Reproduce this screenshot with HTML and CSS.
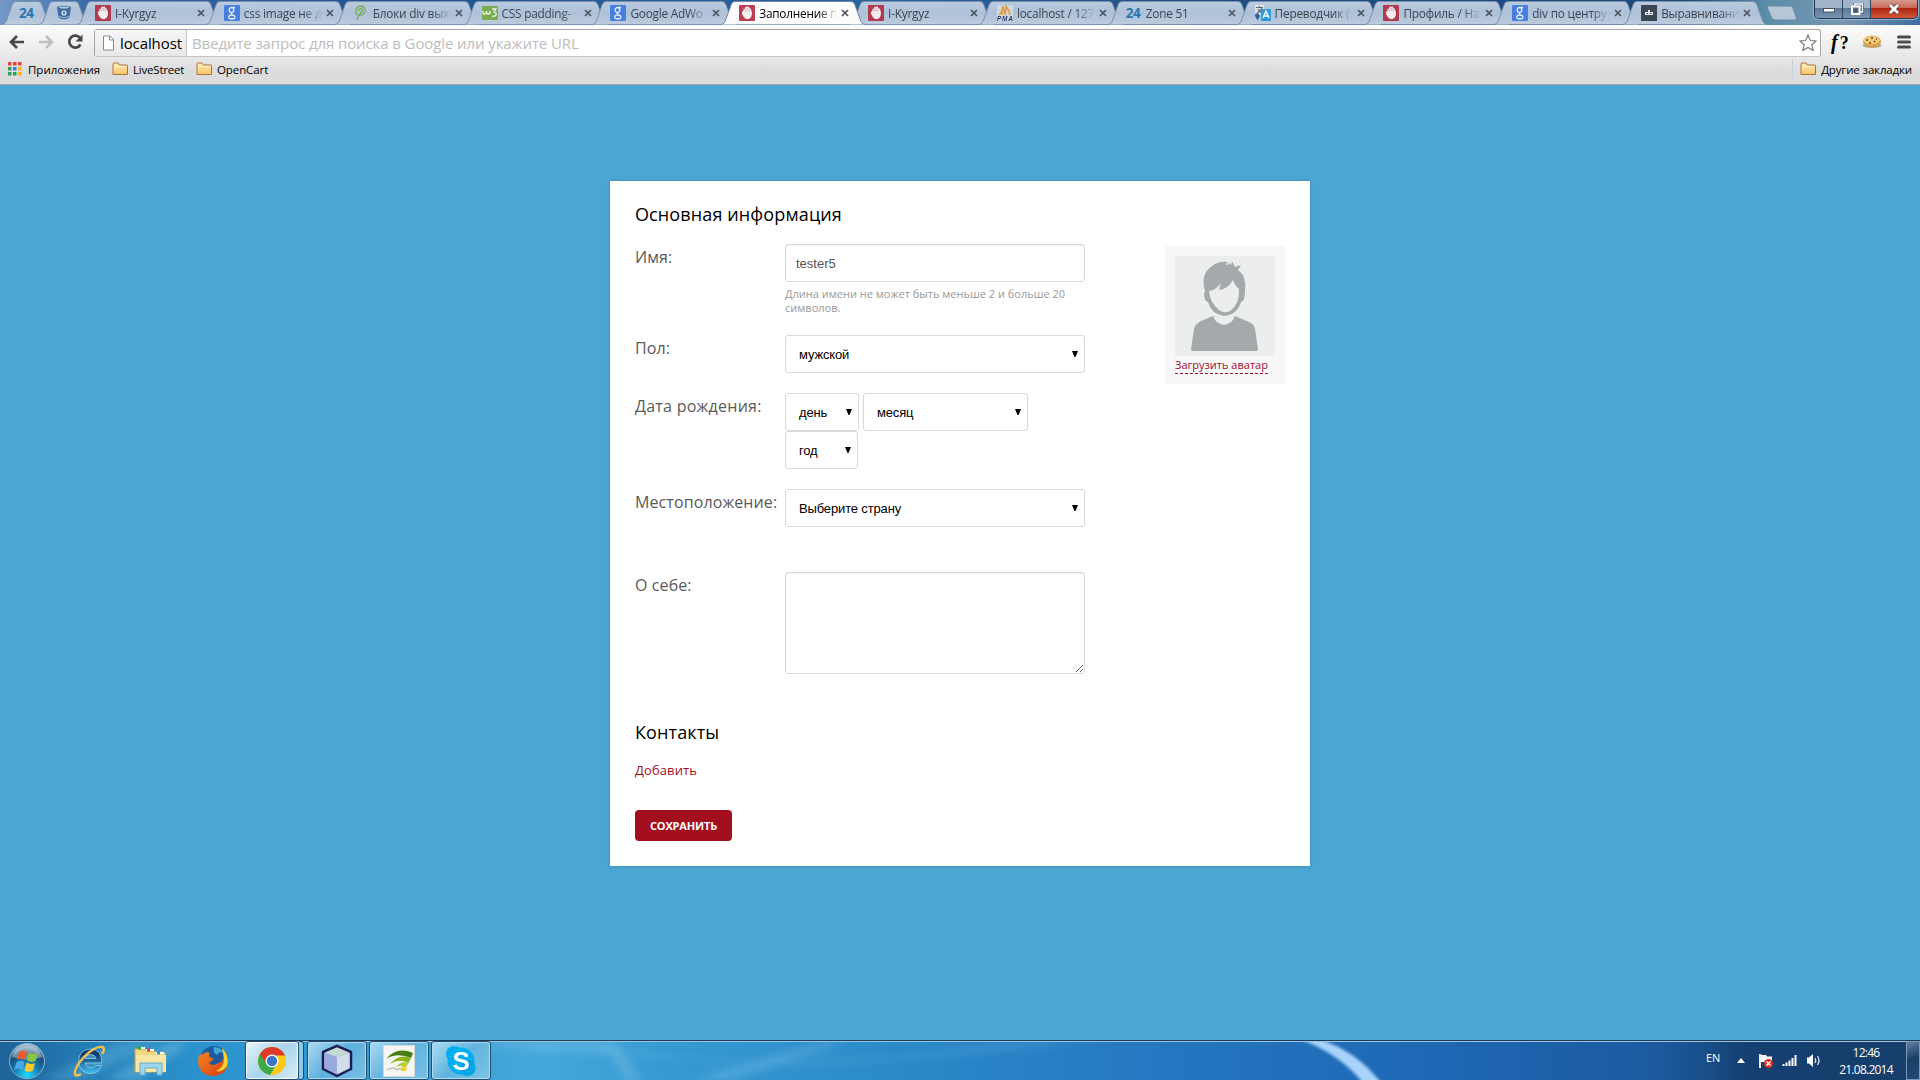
FILE: index.html
```html
<!DOCTYPE html>
<html lang="ru">
<head>
<meta charset="utf-8">
<title>Заполнение профиля</title>
<link rel="stylesheet" href="styles.css">
</head>
<body>
<svg class="defs" width="0" height="0">
  <defs>
    <linearGradient id="tabfill" x2="0" y2="1"><stop offset="0" stop-color="#bacbdf"/><stop offset=".5" stop-color="#aec1d8"/><stop offset="1" stop-color="#bdcbdd"/></linearGradient>
    <linearGradient id="folderfill" x2="0" y2="1"><stop stop-color="#ffe9b8"/><stop offset="1" stop-color="#fbc566"/></linearGradient>
    <radialGradient id="orb" cx=".5" cy=".9" r=".9"><stop stop-color="#21dcff"/><stop offset=".4" stop-color="#147cb0"/><stop offset=".7" stop-color="#194d78"/><stop offset="1" stop-color="#b9d2e3"/></radialGradient>
    <linearGradient id="ieblue" x2="0" y2="1"><stop offset=".2" stop-color="#16386b"/><stop offset="1" stop-color="#3cc0f5"/></linearGradient>
    <linearGradient id="fox" x2="1" y2="1"><stop stop-color="#f58a1f"/><stop offset="1" stop-color="#d93a10"/></linearGradient>
  </defs>
  <symbol id="tab" viewBox="0 0 144 25" preserveAspectRatio="none"><path d="M0 24.5C3 24 4 22 5 19L10 5Q11 1.500 14 1.500H130Q133 1.500 134 5L139 19C140 22 141 24 144 24.500"/></symbol>
  <symbol id="tab-pinned" viewBox="0 0 50 25"><path d="M0 24.500C3 24 4 22 5 19L10 5Q11 1.500 14 1.500H36Q39 1.500 40 5L45 19C46 22 47 24 50 24.500"/></symbol>
  <symbol id="x" viewBox="0 0 8 8"><path d="M1 1L7 7M7 1L1 7" stroke="#4c545e" stroke-width="1.700"/></symbol>
  <symbol id="hand" viewBox="0 0 16 16"><rect width="16" height="16" rx="1" fill="#b32e43"/><path d="M3 7L4.500 5.500L4.500 3.500L6 4L6.500 1.500L8 2L9.500 1.300L10.500 3L12 4L13 8Q13 13 9.500 14H7Q4.500 12.500 3 9Z" fill="#f8eff1"/><path d="M6.200 4.500V6.500M8.200 3V6M10.200 3.500V6.500" stroke="#c77a86" stroke-width=".6"/></symbol>
  <symbol id="goog" viewBox="0 0 16 16"><rect width="16" height="16" rx="1" fill="#3f7ae0"/><g fill="none" stroke="#e8effb" stroke-width="1.300"><ellipse cx="7.500" cy="5" rx="2.300" ry="2.500"/><ellipse cx="7.800" cy="12" rx="3" ry="2"/><path d="M8.500 2.500H11M8 7.500Q6 9 9 10"/></g></symbol>
  <symbol id="folder" viewBox="0 0 16 14"><path d="M1 12.500V2Q1 1 2 1H6L7.500 3H14.500Q15.500 3 15.500 4V12.500Z" fill="url(#folderfill)" stroke="#a8763c"/><path d="M2 4.500H14.500" stroke="#fff3d0"/></symbol>
  <symbol id="arrow" viewBox="0 0 6 6"><path d="M0 0H6L3.500 6H2.500Z"/></symbol>
</svg>

<header class="browser">
  <div class="tabstrip">
    <div class="tab pinned first"><svg class="shape"><use href="#tab-pinned"/></svg><b class="zone">24</b></div>
    <div class="tab pinned"><svg class="shape"><use href="#tab-pinned"/></svg><svg class="fav" viewBox="0 0 16 16"><path d="M1 2Q8-.5 15 2L13.500 12.500Q8 16.500 2.500 12.500Z" fill="#336699"/><ellipse cx="8" cy="2.500" rx="5" ry="1" fill="#b3c9df"/><circle cx="8" cy="8" r="2.600" fill="#dfe8f1"/><circle cx="8" cy="8" r="1.200" fill="#336699"/><path d="M3 11.500Q8 14 13 11.500" stroke="#b3c9df" fill="none" stroke-width=".8"/></svg></div>
    <div class="tab start"><svg class="shape"><use href="#tab"/></svg><svg class="fav"><use href="#hand"/></svg><span class="title">I-Kyrgyz</span><svg class="close"><use href="#x"/></svg></div>
    <div class="tab"><svg class="shape"><use href="#tab"/></svg><svg class="fav"><use href="#goog"/></svg><span class="title">css image не д</span><svg class="close"><use href="#x"/></svg></div>
    <div class="tab"><svg class="shape"><use href="#tab"/></svg><svg class="fav" viewBox="0 0 16 16"><path d="M4 15Q6 9 9 7M7 10Q2 11 3 5Q4 1 8 1Q13 2 12 7Q10 11 6 10M5 6Q7 2 10 5Q9 8 7 7" fill="none" stroke="#75a953" stroke-width="1.300"/></svg><span class="title">Блоки div вых</span><svg class="close"><use href="#x"/></svg></div>
    <div class="tab"><svg class="shape"><use href="#tab"/></svg><svg class="fav" viewBox="0 0 16 16"><rect y="1" width="16" height="14" rx="1" fill="#74ad43"/><path d="M1 6V8Q2.500 10 4.500 8V6V8Q6 10 8 8V6M10 4H14L12 7Q15 8 14 10Q12 12 10 11" fill="none" stroke="#f3f8ee" stroke-width="1.300"/></svg><span class="title">CSS padding-</span><svg class="close"><use href="#x"/></svg></div>
    <div class="tab"><svg class="shape"><use href="#tab"/></svg><svg class="fav"><use href="#goog"/></svg><span class="title">Google AdWo</span><svg class="close"><use href="#x"/></svg></div>
    <div class="tab active"><svg class="shape"><use href="#tab"/></svg><svg class="fav"><use href="#hand"/></svg><span class="title">Заполнение п</span><svg class="close"><use href="#x"/></svg></div>
    <div class="tab"><svg class="shape"><use href="#tab"/></svg><svg class="fav"><use href="#hand"/></svg><span class="title">I-Kyrgyz</span><svg class="close"><use href="#x"/></svg></div>
    <div class="tab"><svg class="shape"><use href="#tab"/></svg><svg class="fav" viewBox="0 0 16 16"><rect width="16" height="16" fill="#d3dbe3"/><path d="M2 10Q6 6 6 1L8 10M8 10Q9 5 9 1Q12 5 13 10M5 10V4" stroke="#e8942e" stroke-width="1.500" fill="none"/><text class="pma" x="0" y="15.800" textLength="16">PMA</text></svg><span class="title">localhost / 127</span><svg class="close"><use href="#x"/></svg></div>
    <div class="tab"><svg class="shape"><use href="#tab"/></svg><b class="zone">24</b><span class="title">Zone 51</span><svg class="close"><use href="#x"/></svg></div>
    <div class="tab"><svg class="shape"><use href="#tab"/></svg><svg class="fav" viewBox="0 0 16 16"><rect width="9" height="10" fill="#e6e9e4"/><path d="M1 2.500H8M4.500 1V3M2 8Q6 6 7 3M3 4Q5 8 8 8" stroke="#51616d" stroke-width="1.200" fill="none"/><path d="M0 9L3 8L5 11L3 15Q0 13 0 9" fill="#135fae"/><rect x="6" y="4" width="10" height="12" rx="1" fill="#2196dc"/><path d="M8 13L11 6L14 13M9 11H13" stroke="#fff" stroke-width="1.400" fill="none"/></svg><span class="title">Переводчик (</span><svg class="close"><use href="#x"/></svg></div>
    <div class="tab"><svg class="shape"><use href="#tab"/></svg><svg class="fav"><use href="#hand"/></svg><span class="title">Профиль / На</span><svg class="close"><use href="#x"/></svg></div>
    <div class="tab"><svg class="shape"><use href="#tab"/></svg><svg class="fav"><use href="#goog"/></svg><span class="title">div по центру</span><svg class="close"><use href="#x"/></svg></div>
    <div class="tab"><svg class="shape"><use href="#tab"/></svg><svg class="fav" viewBox="0 0 16 16"><rect width="16" height="16" fill="#303d46"/><path d="M4 7H12V10H4ZM7 5H9V7H7Z" fill="#e6ebee"/><path d="M5.500 8.500H7M9 8.500H10.500" stroke="#303d46"/></svg><span class="title">Выравнивани</span><svg class="close"><use href="#x"/></svg></div>
    <svg class="newtab" viewBox="0 0 32 16"><path d="M2.500 1H24Q26 1 27 3L30.500 13Q31 15 29 15H9Q6.500 15 5.500 12.500L1.500 3Q1 1 2.500 1Z" fill="#b5c6d8" stroke="#6c87a5"/></svg>
    <div class="winctl">
      <div class="wbtn"><svg viewBox="0 0 14 12" width="14" height="12"><rect x="1.500" y="5.500" width="11" height="3.500" fill="#fff" stroke="#455468"/></svg></div>
      <div class="wbtn"><svg viewBox="0 0 14 12" width="14" height="12"><path d="M4.500 1H12.500V9H4.500Z" fill="none" stroke="#44536a" stroke-width="3"/><path d="M4.500 1H12.500V9H4.500Z" fill="none" stroke="#fff" stroke-width="1.500"/><rect x="2" y="3.500" width="7.500" height="7.500" fill="#5a6d85" stroke="#fff" stroke-width="2"/><rect x="4.500" y="6" width="2.500" height="2.500" fill="#44536a"/></svg></div>
      <div class="wbtn red"><svg viewBox="0 0 14 12" width="14" height="12"><path d="M3 2L11 10M11 2L3 10" stroke="#5d3a3f" stroke-width="4.400"/><path d="M3 2L11 10M11 2L3 10" stroke="#fff" stroke-width="2.800"/></svg></div>
    </div>
  </div>

  <div class="toolbar">
    <svg class="nav" viewBox="0 0 18 18"><path d="M16 9H3M9 3L3 9L9 15" fill="none" stroke="#474747" stroke-width="2.700"/></svg>
    <svg class="nav fwd" viewBox="0 0 18 18"><path d="M2 9H15M9 3L15 9L9 15" fill="none" stroke="#bfbfbf" stroke-width="2.500"/></svg>
    <svg class="nav reload" viewBox="0 0 18 18"><path d="M14.200 5.200A6 6 0 1 0 14.500 11.500" fill="none" stroke="#474747" stroke-width="2.600"/><path d="M16.500 1.500V8.500H9.500Z" fill="#474747"/></svg>
    <div class="omnibox">
      <div class="chip"><svg width="13" height="16" viewBox="0 0 13 16"><path d="M1.500 1H8L11.500 4.500V15H1.500Z" fill="#fff" stroke="#8a8a8a"/><path d="M7.500 1V5H11.500" fill="none" stroke="#8a8a8a"/></svg><span>localhost</span></div>
      <span class="ph">Введите запрос для поиска в Google или укажите URL</span>
      <svg class="star" viewBox="0 0 18 18"><path d="M9 1L11.400 6.500L17 7L12.800 10.800L14.200 16.500L9 13.500L3.800 16.500L5.200 10.800L1 7L6.600 6.500Z" fill="#fff" stroke="#777" stroke-width="1.100"/></svg>
    </div>
    <div class="fq"><i>f</i>?</div>
    <svg class="cookie" viewBox="0 0 20 14"><ellipse cx="10" cy="10.500" rx="9.500" ry="2.500" fill="#a9a9a4"/><ellipse cx="10" cy="6.500" rx="9" ry="6" fill="#dba13f"/><ellipse cx="9.500" cy="5.200" rx="8" ry="4.300" fill="#f1ca76"/><path d="M4 5H6M9 3H11M12 6L13 7M7 8H9M14 4H15" stroke="#6d4217" stroke-width="1.300"/></svg>
    <svg class="menu" viewBox="0 0 14 14"><path d="M1.500 2H12.500M1.500 7H12.500M1.500 12H12.500" stroke="#4c4c4c" stroke-width="3" stroke-linecap="round"/></svg>
  </div>

  <nav class="bookmarks">
    <svg class="apps" viewBox="0 0 14 14"><g fill="#ea4335"><path d="M0 0H3.500V3.500H0ZM5 0H8.500V3.500H5ZM10 0H13.500V3.500H10Z"/></g><path d="M0 5H3.500V8.500H0ZM0 10H3.500V13.500H0ZM5 10H8.500V13.500H5Z" fill="#2ba35a"/><path d="M5 5H8.500V8.500H5Z" fill="#3d7df0"/><path d="M10 5H13.500V8.500H10ZM10 10H13.500V13.500H10Z" fill="#f5b21a"/></svg>
    <span class="b-apps">Приложения</span>
    <svg class="folder"><use href="#folder"/></svg><span class="b-live">LiveStreet</span>
    <svg class="folder"><use href="#folder"/></svg><span>OpenCart</span>
    <i class="sep"></i>
    <svg class="folder"><use href="#folder"/></svg><span class="b-other">Другие закладки</span>
  </nav>
</header>

<main class="page">
  <form class="card">
    <h2 class="heading">Основная информация</h2>
    <div class="columns">
      <div class="fields">
        <div class="row r-name"><label class="label">Имя:</label><div class="value"><div class="field text">tester5</div><p class="hint">Длина имени не может быть меньше 2 и больше 20 символов.</p></div></div>
        <div class="row"><label class="label">Пол:</label><div class="value"><div class="field select">мужской<svg><use href="#arrow"/></svg></div></div></div>
        <div class="row"><label class="label l-date">Дата рождения:</label><div class="value dates"><div class="field select day">день<svg><use href="#arrow"/></svg></div><div class="field select month">месяц<svg><use href="#arrow"/></svg></div><div class="field select year">год<svg><use href="#arrow"/></svg></div></div></div>
        <div class="row r-place"><label class="label">Местоположение:</label><div class="value"><div class="field select">Выберите страну<svg><use href="#arrow"/></svg></div></div></div>
        <div class="row"><label class="label">О себе:</label><div class="value"><textarea class="field area"></textarea></div></div>
      </div>
      <aside class="avatar">
        <svg viewBox="0 0 100 100"><rect width="100" height="100" fill="#ebeeed"/><g fill="#a5a9ac"><path d="M30 35Q25 18 37 10Q44 5 52 6L51 9L54 8L51 5L56 9L57 5L60 11L66 9L63 14Q72 20 70 35Q70 45 66 46Q62 59 49 60Q36 58 33 46Q29 45 29 38Z"/><path d="M38 60L48 63H51L60 60L74 66Q79 68 80 73L83 93Q83 95 80 95H18Q16 95 16 93L19 73Q20 68 26 65Z"/></g><path d="M34 35Q41 34 46 27L44 34Q53 33 58 24Q60 30 64 33Q65 48 55 55Q49 58 44 54Q35 47 34 35Z" fill="#ebeeed"/><path d="M38 60Q41 68 49 69Q57 68 60 60Q54 62 49 62Q43 62 38 60Z" fill="#ebeeed"/></svg>
        <a class="upload">Загрузить аватар</a>
      </aside>
    </div>
    <h2 class="heading contacts">Контакты</h2>
    <a class="add">Добавить</a>
    <button class="save" type="button">СОХРАНИТЬ</button>
  </form>
</main>

<footer class="taskbar">
  <svg class="aurora" viewBox="0 0 1920 38" preserveAspectRatio="none">
    <defs><filter id="soft"><feGaussianBlur stdDeviation="4"/></filter><filter id="soft2"><feGaussianBlur stdDeviation="1.800"/></filter></defs>
    <g filter="url(#soft)" fill="#8ed2ef"><path d="M40 38L120 0H160L80 38Z" opacity=".25"/><path d="M105 38L170 0H190L140 38Z" opacity=".35"/><path d="M490 0H615L642 38H625L610 12L490 6Z" opacity=".3"/><path d="M690 38L825 0H845L730 38Z" opacity=".3"/><path d="M600 5Q800 35 1010 0H1080Q900 20 800 22Q700 20 600 10Z" opacity=".22"/></g>
    <path d="M1300-3Q1340 12 1364 42H1382Q1356 8 1318-3Z" fill="#a9d3fb" filter="url(#soft2)"/>
  </svg>
  <div class="launch start-orb"><svg width="38" height="38" viewBox="0 0 38 38"><circle cx="19" cy="19" r="17.500" fill="url(#orb)" stroke="#8fb4cc"/><path d="M4 15Q7 4 19 4T34 15Q20 20 4 15Z" fill="#fff" opacity=".35"/><path d="M11 10Q15 7 19 10L17 18Q13 15 9 18Z" fill="#ed5a2b"/><path d="M21 10.500Q25 13 30 11L27.500 19Q23 21 19 18.500Z" fill="#8bc63f"/><path d="M8.500 20Q12.500 17 16.500 20L14.500 28Q10 25 6 28Z" fill="#4aa7e8"/><path d="M18.500 20.500Q23 23 27 21L25 28.500Q21 31 16.500 28.500Z" fill="#fbc928"/></svg></div>
  <div class="launch"><svg width="34" height="34" viewBox="0 0 34 34"><path d="M30 19H13Q14 24 19 24Q22 24 23.500 21.500H29.500Q27 29.500 18.500 29.500Q7 29 6.500 17Q7 5.500 18.500 5Q30 5.500 30 19ZM13 14.500H24Q23 10.500 18.500 10.500Q14 10.500 13 14.500Z" fill="url(#ieblue)" stroke="#8fd0f2" stroke-width=".8"/><path d="M9 30Q4 33 3 30Q2 24 12 13Q23 2 30 3Q34 4 30 10" fill="none" stroke="#f2c24d" stroke-width="2.400"/></svg></div>
  <div class="launch"><svg width="34" height="32" viewBox="0 0 34 32"><path d="M1 27V4H11L13 6H21L23 8H31V27Z" fill="#f3d77c" stroke="#c9a44b"/><path d="M4 3H11M12 5H20M22 8H30" stroke="#fff" stroke-width="2"/><path d="M4 3H7" stroke="#2cae31" stroke-width="3"/><path d="M13 5H16" stroke="#e43b28" stroke-width="3"/><path d="M23 8H26" stroke="#2b8de0" stroke-width="3"/><path d="M2 10H32V27H2Z" fill="#f8e6a4"/><path d="M6 30V18H28V30H23V23H11V30Z" fill="#9ed5ee" stroke="#69abc9"/></svg></div>
  <div class="launch"><svg width="32" height="32" viewBox="0 0 32 32"><circle cx="17" cy="15" r="14" fill="#1c5a9e"/><path d="M17 2Q24 2 27 8Q22 6 20 10Q15 7 17 2Z" fill="#44a8db"/><path d="M2 8L5 10Q8 6 13 8Q11 10 13 12L17 14L12 18Q16 22 21 18Q27 18 26 9Q27 5 25 4Q31 9 31 17Q30 30 16 31Q2 30 1 17Q1 12 3 10Z" fill="url(#fox)"/><path d="M25 3Q33 11 30 21Q25 28 19 26Q28 22 27 12Z" fill="#fbd12f"/></svg></div>
  <div class="app chrome"><svg width="30" height="30" viewBox="0 0 30 30"><circle cx="15" cy="15" r="14" fill="#fbc916"/><path d="M15 15L2.900 8A14 14 0 0 0 13 28.900L20 18Z" fill="#3bab4b"/><path d="M2.900 8A14 14 0 0 1 28 9.500H15L9.500 18Z" fill="#dd3a2d"/><circle cx="15" cy="15" r="6.500" fill="#fff"/><circle cx="15" cy="15" r="5.200" fill="#3a76c8"/></svg></div>
  <div class="stack"></div>
  <div class="app"><svg width="32" height="34" viewBox="0 0 32 34"><path d="M16 2L30 8V25L16 32L2 25V8Z" fill="#a8b8da" stroke="#1a1e54" stroke-width="2.500" stroke-linejoin="round"/><path d="M3.500 9L16 13V30L3.500 24Z" fill="#9aa9e2"/><path d="M28.500 9L16 13V30L28.500 24Z" fill="#d3dcea"/><path d="M16 3.500L28 8.500L16 13L4 8.500Z" fill="#c3d9d4"/></svg></div>
  <div class="app"><svg width="32" height="32" viewBox="0 0 32 32"><rect x=".5" y=".5" width="31" height="31" fill="#f5f5f1" stroke="#d7ddd5"/><path d="M3 14Q14 1 30 8L28 13Q14 7 3 14Z" fill="#487d14"/><path d="M7 19Q16 8 28 13L25.500 18Q15 13 7 19Z" fill="#8ab51c"/><path d="M12 23Q18 15 25.500 18L23 22Q17 19 12 23Z" fill="#b5cf38"/><circle cx="21" cy="23.500" r="2.700" fill="#eed02f"/><path d="M4 25Q10 21 14 25Q17 22 19 25" stroke="#a0a0a0" fill="none"/></svg></div>
  <div class="app"><svg width="32" height="32" viewBox="0 0 32 32"><circle cx="16" cy="16" r="13.500" fill="#00aff0"/><circle cx="9" cy="9" r="8" fill="#00aff0"/><circle cx="22.500" cy="23" r="8" fill="#00a5e6"/><text class="sk" x="7.500" y="25">S</text></svg></div>
  <div class="tray">
    <span class="lang">EN</span>
    <svg class="up" width="8" height="5" viewBox="0 0 8 5"><path d="M0 5L4 0L8 5Z" fill="#fff"/></svg>
    <svg class="flag" width="16" height="16" viewBox="0 0 16 16"><path d="M2 1V15" stroke="#fff" stroke-width="1.800"/><path d="M3 2H8L9 3.500H14V9H3Z" fill="#fff"/><circle cx="10.500" cy="10.500" r="4.500" fill="#e02b20"/><path d="M8.500 8.500L12.500 12.500M12.500 8.500L8.500 12.500" stroke="#fff" stroke-width="1.500"/></svg>
    <svg class="bars" width="16" height="13" viewBox="0 0 16 13"><path d="M1.500 12V10M4.500 12V8.500M7.500 12V6.500M10.500 12V4M13.500 12V1" stroke="#fff" stroke-width="2"/></svg>
    <svg class="spk" width="16" height="15" viewBox="0 0 16 15"><path d="M1 4.500H3L7 1V14L3 10.500H1Z" fill="#fff"/><path d="M9 5Q10.500 7.500 9 10M11.500 3Q14.500 7.500 11.500 12" fill="none" stroke="#dbe6f0" stroke-width="1.200"/></svg>
    <div class="clock"><span>12:46</span><span>21.08.2014</span></div>
    <div class="desk"></div>
  </div>
</footer>
</body>
</html>
```

FILE: styles.css
```css
* { box-sizing: border-box; }
body { margin: 0; width: 1920px; height: 1080px; overflow: hidden; display: flex; flex-direction: column; background: #4ca6d3; font-family: "Open Sans", sans-serif; }
.defs { position: absolute; }
svg { display: block; flex: none; }
h2, p { margin: 0; }

/* Browser chrome */
.browser { height: 85px; flex: none; display: flex; flex-direction: column; border-bottom: 1px solid #a3a3a3; background: #dedede; }
.tabstrip { height: 25px; flex: none; display: flex; align-items: flex-start; background: linear-gradient(90deg, #7399c8 0, #3567a4 5%, #215490 20%, #2a629f 45%, #1f4d83 65%, #1e4a7d 88%, #5b8ea8 92%, #7896b4 96%, #3d6da0 100%); }
.tab { position: relative; width: 144px; height: 25px; margin-right: -15.170px; flex: none; display: flex; align-items: center; padding: 0 0 0 18px; }
.shape { position: absolute; left: 0; top: 0; width: 144px; height: 25px; fill: url(#tabfill); stroke: #7b8fa8; z-index: 0; }
.tab.pinned { width: 50px; margin-right: -9px; padding: 0; justify-content: center; }
.tab.first { margin-left: 2px; margin-right: -13px; }
.tab.pinned .shape { width: 50px; }
.tab.pinned .fav, .tab.pinned .zone { margin-right: 0; }
.tab.start { margin-left: -3px; }
.tab.active { z-index: 2; }
.tab.active .shape { fill: #fcfcfc; stroke: #6e87a6; }
.fav { position: relative; width: 16px; height: 16px; margin-right: 4px; margin-top: 1px; opacity: .92; }
.title { position: relative; width: 78px; white-space: nowrap; font-size: 11.800px; line-height: 20px; letter-spacing: -.2px; color: #3d4550; mask-image: linear-gradient(90deg, #000 76%, transparent 100%); }
.tab.active .title { color: #000; }
.close { position: relative; width: 8px; height: 8px; margin: 1px 0 0 4px; }
.zone { position: relative; width: 16px; margin-right: 4px; font-size: 13.500px; line-height: 20px; letter-spacing: -.4px; color: #2878af; }
.pma { font: italic bold 6.500px "Liberation Sans", sans-serif; fill: #222e62; }
.newtab { width: 32px; height: 16px; margin: 5px 0 0 14px; }
.winctl { display: flex; width: 104px; height: 19px; margin-left: auto; margin-right: 2px; border: 1px solid #25384f; border-top: 0; border-radius: 0 0 5px 5px; overflow: hidden; box-shadow: 0 0 1px 1px #9cb6cf; }
.wbtn { width: 28px; display: flex; align-items: center; justify-content: center; background: linear-gradient(#a0b4c9 0 45%, #5c7896 46%, #7796b3); border-right: 1px solid #2f455e; }
.wbtn.red { flex: 1; border: 0; background: linear-gradient(#d59b8f 0, #c96753 44%, #b0240f 46%, #d0583a); }

.toolbar { height: 33px; flex: none; display: flex; align-items: center; background: linear-gradient(#fcfcfc, #e7e7e7); padding: 1px 8px 0; }
.nav { width: 18px; height: 18px; }
.nav.fwd { margin-left: 11px; }
.nav.reload { margin-left: 11px; }
.omnibox { width: 1727px; height: 28px; margin: 2px 0 0 10px; display: flex; align-items: center; background: #fff; border: 1px solid #a5a5a5; border-bottom-color: #c4c4c4; border-radius: 3px; }
.chip { width: 92px; height: 26px; display: flex; align-items: center; gap: 5px; padding-left: 7px; background: linear-gradient(#f6f6f6, #e8e8e8); border-right: 1px solid #c2c2c2; font-size: 15px; letter-spacing: -.1px; color: #000; }
.ph { margin-left: 5px; font-size: 15px; letter-spacing: -.1px; color: #bcbcbc; white-space: nowrap; }
.star { width: 18px; height: 18px; margin: 0 3px 0 auto; }
.fq { width: 22px; margin-left: 10px; font: bold 18px/24px "Liberation Serif", serif; letter-spacing: 2px; white-space: nowrap; }
.fq i { font-size: 20px; }
.cookie { width: 20px; height: 14px; margin-left: 9px; }
.menu { width: 14px; height: 14px; margin-left: 15px; }
.bookmarks { flex: 1; display: flex; align-items: center; padding: 0 8px 4px; background: linear-gradient(#e7e7e7, #dcdcdc 50%); font-size: 11.500px; letter-spacing: -.1px; color: #000; white-space: nowrap; }
.apps { width: 14px; height: 14px; margin-right: 6px; }
.folder { width: 16px; height: 14px; margin-right: 5px; }
.b-apps { width: 84px; letter-spacing: 0; }
.b-live { width: 63px; letter-spacing: -.2px; }
.sep { width: 1px; height: 20px; margin: 0 7px 0 auto; background: #c5d0da; }
.b-other { letter-spacing: -.15px; }

/* Profile form */
.page { flex: 1; }
.card { width: 700px; height: 685px; margin: 96px auto 0; padding: 21px 25px; background: #fff; box-shadow: 0 0 3px rgba(0, 0, 0, .2); display: flex; flex-direction: column; align-items: flex-start; }
.heading { font-size: 18px; font-weight: 400; line-height: 24px; letter-spacing: .12px; color: #000; }
.columns { width: 650px; margin-top: 18px; display: flex; justify-content: space-between; align-items: flex-start; }
.row { display: flex; margin-bottom: 20px; }
.label { width: 150px; height: 20px; padding-top: 3px; font-size: 16px; line-height: 20px; letter-spacing: .1px; color: #5a5a5a; white-space: nowrap; }
.l-date { letter-spacing: .25px; }
.value { width: 300px; }
.field { height: 38px; border: 1px solid #d9d9d9; border-radius: 3px; display: flex; align-items: center; font: 13px "Liberation Sans", sans-serif; background: #fff; }
.text { padding: 0 10px; color: #555; box-shadow: inset 0 1px 2px rgba(0, 0, 0, .07); }
.hint { margin-top: 5px; font-size: 11px; line-height: 14px; color: #999; }
.select { padding: 1px 6px 0 13px; justify-content: space-between; color: #000; letter-spacing: -.15px; }
.select svg { width: 6px; height: 6px; margin-top: -2px; }
.dates { display: flex; flex-wrap: wrap; column-gap: 4px; }
.day { width: 74px; }
.month { width: 165px; }
.year { width: 73px; }
.r-place { margin-bottom: 45px; }
.area { display: block; width: 300px; height: 102px; padding: 8px; box-shadow: inset 0 1px 2px rgba(0, 0, 0, .07); }
.avatar { width: 120px; height: 138px; margin-top: 2px; padding: 10px; background: #f7f7f7; display: flex; flex-direction: column; align-items: flex-start; }
.avatar svg { width: 100px; height: 100px; }
.upload { margin-top: 1px; border-bottom: 1px dashed #a31030; font-size: 11px; line-height: 16px; color: #a31030; white-space: nowrap; }
.contacts { margin-top: 26px; }
.add { margin-top: 17px; font-size: 13px; line-height: 18px; letter-spacing: .1px; color: #a40e22; }
.save { width: 97px; height: 31px; margin-top: 31px; padding: 0; border: 0; border-radius: 4px; background: #a40f20; color: #fff; font: bold 11px "Open Sans", sans-serif; letter-spacing: -.15px; }

/* Taskbar */
.taskbar { position: relative; height: 40px; flex: none; display: flex; align-items: stretch; border-top: 1px solid #1f3a56; box-shadow: inset 0 1px #9cc8e4; background: linear-gradient(90deg, #1d6299 0, #2480b8 5%, #2a91cc 10%, #3aa2d6 24%, #45a8da 28%, #3799d2 35%, #2a88c8 48%, #2475c0 62%, #1e67b4 75%, #1c5ba1 86%, #184d87 89%, #153f6f 91%, #163f6c 100%); }
.aurora { position: absolute; left: 0; top: 1px; width: 1920px; height: 38px; }
.launch { position: relative; width: 62px; display: flex; align-items: center; justify-content: center; }
.start-orb { width: 58px; padding-right: 4px; }
.sk { font: bold 26px "Liberation Sans", sans-serif; fill: #fff; }
.app { position: relative; width: 60px; margin-right: 2px; border: 1px solid #214e70; border-radius: 3px; display: flex; align-items: center; justify-content: center; background: linear-gradient(135deg, rgba(215, 240, 252, .75), rgba(130, 195, 228, .55) 50%, rgba(165, 215, 240, .6)); box-shadow: inset 0 0 0 1px #b2dcf1; }
.chrome { width: 54px; margin: 0 0 0 1px; background: linear-gradient(135deg, #e9f5fb, #a8d4ea 50%, #d9eef8); box-shadow: inset 0 0 0 1px #fff; }
.stack { position: relative; width: 5px; margin-right: 3px; border: 1px solid #214e70; border-left: 0; border-radius: 0 3px 3px 0; background: #8ec9e5; }
.tray { position: relative; margin-left: auto; display: flex; align-items: center; color: #fff; font-size: 12px; }
.lang { width: 15px; margin: -6px 16px 0 0; font-size: 11px; }
.flag { margin-left: 13px; }
.bars { margin-left: 8px; }
.spk { margin-left: 8px; }
.clock { width: 60px; margin: 1px 10px 0 14px; display: flex; flex-direction: column; align-items: center; line-height: 17px; letter-spacing: -.75px; }
.desk { align-self: stretch; width: 14px; margin-left: 0; border: 1px solid #7d9ab5; background: linear-gradient(160deg, #62819f, #1a3f66 45%, #204c78); }
```
